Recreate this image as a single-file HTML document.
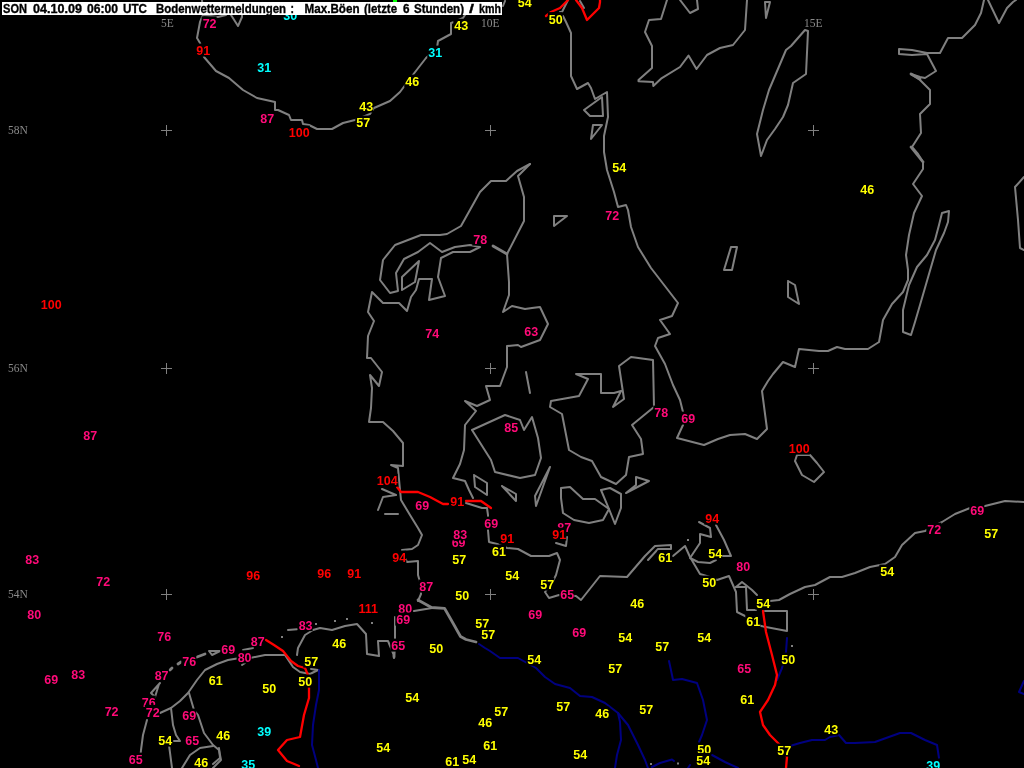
<!DOCTYPE html>
<html lang="de"><head><meta charset="utf-8"><title>Bodenwettermeldungen</title>
<style>
html,body{margin:0;padding:0;background:#000;overflow:hidden}
svg{display:block;will-change:transform}
.l{font-family:"Liberation Sans",sans-serif;font-weight:bold;font-size:12.5px;text-anchor:middle}
.g{font-family:"Liberation Serif",serif;font-size:11.5px;fill:#8a8a8a}
.t{font-family:"Liberation Sans",sans-serif;font-weight:bold;font-size:13px;fill:#000;stroke:#000;stroke-width:.35px}
polyline{fill:none;stroke-linejoin:round;stroke-linecap:round}
</style></head><body>
<svg width="1024" height="768" viewBox="0 0 1024 768">
<rect width="1024" height="768" fill="#000"/>
<g>
<polyline points="202,0 203,15 200,22 197,38 200,43 204,57 216,71 229,78 243,90 257,98 275,102 275,110 278,110 289,115 291,120 302,120 303,124 309,125 317,129 332,129 343,123 355,120 370,114 374,108 390,101 400,92 412,76 426,58 437,48 438,41 451,34 451,23 454,22 463,18 465,15" stroke="#808080" stroke-width="2"/>
<polyline points="203,15 218,17 226,15" stroke="#808080" stroke-width="2"/>
<polyline points="231,15 238,26 242,17 242,14" stroke="#808080" stroke-width="2"/>
<polyline points="503,6 505,1" stroke="#808080" stroke-width="2"/>
<polyline points="568,0 562,12 560,12" stroke="#808080" stroke-width="2"/>
<polyline points="580,1 584,8" stroke="#808080" stroke-width="2"/>
<polyline points="563,16 566,22 571,33 571,76 577,89 588,83 591,88 595,99 607,92 608,117 604,136 604,152 607,170 614,192 618,207 626,205 628,210 631,227 638,247 651,268 678,303 672,316 660,320 670,334 658,338 655,346 665,364 673,385 680,400 683,412 683,425 677,438 704,445 718,439 730,435 745,434 757,439 767,429 762,391 768,381 773,374 783,362 795,367 799,349 819,351 828,351 837,347 845,349 868,349 879,342 883,320 892,304 903,292 908,280 908,270 906,255 909,235 914,213 922,196 913,184 923,169 923,162 918,154 912,147 921,133 920,114 930,104 930,90 920,80 911,74 920,77 925,78 936,71 927,54 912,55 899,54 899,49 912,50 927,53 940,53 948,38 962,38 975,25 981,13 984,0" stroke="#808080" stroke-width="2"/>
<polyline points="584,110 602,97 603,116 590,116 584,110" stroke="#808080" stroke-width="2"/>
<polyline points="593,125 602,125 591,139 593,125" stroke="#808080" stroke-width="2"/>
<polyline points="667,0 661,19 649,20 645,32 652,46 652,68 638.5,80 638.5,81.3 653,82 653.3,86 661,78.7 680,67 688.5,55.6 696.5,69 707,55 720,48 733,45 745,30 747,0" stroke="#808080" stroke-width="2"/>
<polyline points="680,0 690,13 698,9 697,0" stroke="#808080" stroke-width="2"/>
<polyline points="765,2 766,18 770,2 765,2" stroke="#808080" stroke-width="2"/>
<polyline points="805,30 808,31 806,74 793,83 788,105 783,117 775,129 767,140 761,156 757,134 763,110 769,90 786,50 791,46 805,30" stroke="#808080" stroke-width="2"/>
<polyline points="988,0 999,23 1007,8 1013,2 1016,0" stroke="#808080" stroke-width="2"/>
<polyline points="1024,177 1015,187 1018,220 1020,248 1024,250" stroke="#808080" stroke-width="2"/>
<polyline points="942,213 949,211 948,222 944,233 936,250 929,274 920,305 915,322 911,335 903,332 903,310 909,285 917,267 927,255 935,240 939,225 942,213" stroke="#808080" stroke-width="2"/>
<polyline points="731,247 737,247 732,270 724,270 731,247" stroke="#808080" stroke-width="2"/>
<polyline points="788,281 795,285 799,304 788,297 788,281" stroke="#808080" stroke-width="2"/>
<polyline points="797,455 810,455 817,463 824,472 814,482 802,475 795,461 797,455" stroke="#808080" stroke-width="2"/>
<polyline points="530,164 517,171 506,181 491,181 480,192 461,226 447,234 440,235 421,235 395,245 383,260 380,280 390,293 398,291 396,273 404,259 418,252 430,243 442,252 455,247 470,245 480,247 470,252 453,252 441,258 438,277 445,296 429,300 432,279 419,279 416,290 411,297 407,311 399,303 383,303 372,292 368,312 374,321 368,336 367,358 371,358 382,372 379,386 370,375 372,388 371,408 369,422 383,422 393,431 403,443 403,466 391,465 398,468 400,490 401,500 410,515 418,528 422,535 418,545 412,549 402,550 404,556 407,562 418,561 418,575 420,582 421,594 418,601" stroke="#808080" stroke-width="2"/>
<polyline points="414,611 432,608" stroke="#808080" stroke-width="2"/>
<polyline points="530,164 518,176 524,197 524,221 507,254 509,282 509,295 503,312 512,306 525,309 532,308 540,307 548,324 540,340 521,347 518,345 507,346 507,367 500,386 486,386 490,400 477,406 465,401 476,411 465,425 464,450 460,464 453,478 465,481 469,490 473,498" stroke="#808080" stroke-width="2"/>
<polyline points="466,503 482,508 487,508 488,515 488,530 489,542 497,544 507,548 518,549 531,556 549,556 557,553 560,560 556,575 552,583 545,592 549,598 559,595 576,596 581,600 600,576 627,577 645,556 655,546 671,545 671,549 658,549 648,560" stroke="#808080" stroke-width="2"/>
<polyline points="556,543 566,546 567,537" stroke="#808080" stroke-width="2"/>
<polyline points="402,277 419,261 415,282 402,290 402,277" stroke="#808080" stroke-width="2"/>
<polyline points="554,216 567,216 554,226 554,216" stroke="#808080" stroke-width="2"/>
<polyline points="526,372 530,393" stroke="#808080" stroke-width="2"/>
<polyline points="472,430 505,415 520,420 524,430 532,417 538,438 541,458 535,475 520,478 495,472 491,460 472,430" stroke="#808080" stroke-width="2"/>
<polyline points="474,475 487,483 487,495 475,487 474,475" stroke="#808080" stroke-width="2"/>
<polyline points="502,486 516,494 516,501 502,486" stroke="#808080" stroke-width="2"/>
<polyline points="550,467 535,496 536,506 550,467" stroke="#808080" stroke-width="2"/>
<polyline points="576,374 588,379 579,396 551,401 550,407 562,414 569,450 581,457 592,461 601,477 616,484 626,475 629,457 643,454 641,439 632,425 654,407 653,360 631,357 619,366 624,399 613,407 621,391 614,393 601,393 601,374 576,374" stroke="#808080" stroke-width="2"/>
<polyline points="561,488 570,487 583,499 595,499 609,509 603,520 589,523 574,520 563,513 561,498 561,488" stroke="#808080" stroke-width="2"/>
<polyline points="601,490 610,488 621,494 621,508 615,524 609,509 601,490" stroke="#808080" stroke-width="2"/>
<polyline points="636,477 649,481 626,493 636,485 636,477" stroke="#808080" stroke-width="2"/>
<polyline points="382,489 396,495 383,497 378,510" stroke="#808080" stroke-width="2"/>
<polyline points="385,514 398,514" stroke="#808080" stroke-width="2"/>
<polyline points="673,556 685,546 690,557 700,574 710,577 717,580 729,576 736,592 737,612 747,617 761,626 787,631 787,611 765,611" stroke="#808080" stroke-width="2"/>
<polyline points="699,522 710,528 711,537 700,534 700,543 690,558 698,562 710,563 716,560" stroke="#808080" stroke-width="2"/>
<polyline points="716,525 724,540 731,556 722,556" stroke="#808080" stroke-width="2"/>
<polyline points="736,587 742,582 752,590 757,595" stroke="#808080" stroke-width="2"/>
<polyline points="736,587 746,587 747,610 756,610" stroke="#808080" stroke-width="2"/>
<polyline points="770,601 779,600 790,594 805,587 815,585 830,577 842,577 855,573 870,567 880,565 885,564 895,557 902,545 915,533 925,531 942,522 955,514 970,508 985,506 1005,501 1024,502" stroke="#808080" stroke-width="2"/>
<polyline points="160,713 171,708 180,701 188,693 197,680 205,670 217,664 228,660 240,658 250,658 265,655 285,655 293,667 300,672 310,674 318,670 311,669" stroke="#808080" stroke-width="2"/>
<polyline points="297,655 298,648 305,635 313,630 320,628 332,630 345,626 357,624 366,634 367,654 379,656 378,641 388,641 393,653" stroke="#808080" stroke-width="2"/>
<polyline points="395,617 395,647 394,658" stroke="#808080" stroke-width="2"/>
<polyline points="171,708 173,725 176,735 180,741 174,741" stroke="#808080" stroke-width="2"/>
<polyline points="189,693 194,710 198,715 204,733 213,745 219,750 221,760 213,768" stroke="#808080" stroke-width="2"/>
<polyline points="213,746 200,748 190,755 182,768" stroke="#808080" stroke-width="2"/>
<polyline points="219,748 220,758 213,764" stroke="#808080" stroke-width="2"/>
<polyline points="160,683 151,693 155,697 159,684" stroke="#808080" stroke-width="2"/>
<polyline points="147,720 143,735 141,750 140,762" stroke="#808080" stroke-width="2"/>
<polyline points="169,745 172,768" stroke="#808080" stroke-width="2"/>
<polyline points="209,651 220,651 212,655 209,651" stroke="#808080" stroke-width="2"/>
<polyline points="243,650 253,648" stroke="#808080" stroke-width="2"/>
<polyline points="242,665 245,663" stroke="#808080" stroke-width="2"/>
<polyline points="288,630 297,629.3" stroke="#808080" stroke-width="2"/>
<polyline points="493,246 507,254" stroke="#808080" stroke-width="2.8"/>
<polyline points="911,147 923,162" stroke="#808080" stroke-width="2.8"/>
<polyline points="911,74 920,79" stroke="#808080" stroke-width="2.8"/>
<polyline points="418,600 431.5,607.5 444.5,608.3 453.5,624 460.5,636.5 466,639.5 476,642" stroke="#808080" stroke-width="2.8"/>
<polyline points="170,670 172,668" stroke="#808080" stroke-width="2.8"/>
<polyline points="178,664 181,662" stroke="#808080" stroke-width="2.8"/>
<polyline points="197,657 205,654" stroke="#808080" stroke-width="2.8"/>
<polyline points="393,641 394,657" stroke="#808080" stroke-width="2.8"/>
<rect x="650" y="763" width="2" height="2" fill="#808080"/>
<rect x="677" y="762.5" width="2" height="2" fill="#808080"/>
<rect x="281" y="636" width="2" height="2" fill="#808080"/>
<rect x="315" y="623" width="2" height="2" fill="#808080"/>
<rect x="334" y="620" width="2" height="2" fill="#808080"/>
<rect x="346" y="618" width="2" height="2" fill="#808080"/>
<rect x="371" y="622" width="2" height="2" fill="#808080"/>
<rect x="687" y="539" width="2" height="2" fill="#808080"/>
<rect x="791" y="645" width="2" height="2" fill="#808080"/>
<polyline points="319,670 319,690 316,705 313,725 312,745 316,760 318,768" stroke="#000080" stroke-width="2"/>
<polyline points="479,644 485,648 490,651 500,658 518,658 527,663 536,668 545,677 555,684 570,688 580,696 592,697 605,703 618,713 620,722 621,740 617,755 615,768" stroke="#000080" stroke-width="2"/>
<polyline points="618,713 628,725 638,745 645,760 648,768" stroke="#000080" stroke-width="2"/>
<polyline points="669,661 672,675 673,680 682,679 697,683 703,700 707,720 702,735 699,742" stroke="#000080" stroke-width="2"/>
<polyline points="652,767 660,763 672,759.5 674,761" stroke="#000080" stroke-width="2"/>
<polyline points="688,768 690,765" stroke="#000080" stroke-width="2"/>
<polyline points="712,755 725,762 738,768" stroke="#000080" stroke-width="2"/>
<polyline points="787,638 786,652 782,668 777,680" stroke="#000080" stroke-width="2"/>
<polyline points="790,746 800,743 812,740 825,740 830,737 839,735 846,743 855,743 875,742 900,733 911,733 925,740 937,745 939,758" stroke="#000080" stroke-width="2"/>
<polyline points="1024,681 1019,692 1024,694" stroke="#000080" stroke-width="2"/>
<polyline points="397,487 401,492 418,492 430,497 443,504 448,504" stroke="#ff0000" stroke-width="2.3"/>
<polyline points="466,501 481,501 491,508" stroke="#ff0000" stroke-width="2.3"/>
<polyline points="266,640 274,645 283,651 291,661 298,666 305,668 308,675 309,688 309,698 304,715 300,737 287,740 278,750 287,761 299,766" stroke="#ff0000" stroke-width="2.3"/>
<polyline points="763,611 766,632 772,655 777,675 775,685 768,700 760,712 763,725 770,735 780,745 787,757 786,768" stroke="#ff0000" stroke-width="2.3"/>
<polyline points="546,16 551,12 560,8 566,2 568,0" stroke="#ff0000" stroke-width="2.3"/>
<polyline points="576,0 582,8 587,20 595,12 599,8 600,2 600,0" stroke="#ff0000" stroke-width="2.3"/>
</g>
<g stroke="#808080" stroke-width="1" shape-rendering="crispEdges">
<path d="M161 130.5h11M166.5 125v11"/>
<path d="M161 368.5h11M166.5 363v11"/>
<path d="M161 594.5h11M166.5 589v11"/>
<path d="M485 130.5h11M490.5 125v11"/>
<path d="M485 368.5h11M490.5 363v11"/>
<path d="M485 594.5h11M490.5 589v11"/>
<path d="M808 130.5h11M813.5 125v11"/>
<path d="M808 368.5h11M813.5 363v11"/>
<path d="M808 594.5h11M813.5 589v11"/>
</g>
<text class="g" x="161" y="26.7">5E</text>
<text class="g" x="481" y="26.7">10E</text>
<text class="g" x="804" y="26.7">15E</text>
<text class="g" x="8" y="134">58N</text>
<text class="g" x="8" y="372">56N</text>
<text class="g" x="8" y="598">54N</text>
<rect x="393" y="0" width="4" height="3" fill="#00ff00"/>
<rect x="282.3" y="8.1" width="15" height="13" fill="#000"/><text class="l" fill="#00ffff" x="290.3" y="19.7">30</text>
<rect x="201.6" y="16.4" width="15" height="13" fill="#000"/><text class="l" fill="#ff0a78" x="209.6" y="28">72</text>
<rect x="195.3" y="43.6" width="15" height="13" fill="#000"/><text class="l" fill="#ff0000" x="203.3" y="55.2">91</text>
<rect x="256.3" y="60.6" width="15" height="13" fill="#000"/><text class="l" fill="#00ffff" x="264.3" y="72.2">31</text>
<rect x="259.3" y="111.6" width="15" height="13" fill="#000"/><text class="l" fill="#ff0a78" x="267.3" y="123.2">87</text>
<rect x="287.8" y="125.6" width="22" height="13" fill="#000"/><text class="l" fill="#ff0000" x="299.3" y="137.2">100</text>
<rect x="358.3" y="99.6" width="15" height="13" fill="#000"/><text class="l" fill="#ffff00" x="366.3" y="111.2">43</text>
<rect x="355.3" y="115.6" width="15" height="13" fill="#000"/><text class="l" fill="#ffff00" x="363.3" y="127.2">57</text>
<rect x="404.3" y="74.6" width="15" height="13" fill="#000"/><text class="l" fill="#ffff00" x="412.3" y="86.2">46</text>
<rect x="427.3" y="45.6" width="15" height="13" fill="#000"/><text class="l" fill="#00ffff" x="435.3" y="57.2">31</text>
<rect x="453.3" y="18.8" width="15" height="13" fill="#000"/><text class="l" fill="#ffff00" x="461.3" y="30.4">43</text>
<rect x="516.8" y="-5.1" width="15" height="13" fill="#000"/><text class="l" fill="#ffff00" x="524.8" y="6.5">54</text>
<rect x="547.8" y="12.1" width="15" height="13" fill="#000"/><text class="l" fill="#ffff00" x="555.8" y="23.7">50</text>
<rect x="611.3" y="160.6" width="15" height="13" fill="#000"/><text class="l" fill="#ffff00" x="619.3" y="172.2">54</text>
<rect x="859.3" y="182.6" width="15" height="13" fill="#000"/><text class="l" fill="#ffff00" x="867.3" y="194.2">46</text>
<rect x="39.8" y="297.6" width="22" height="13" fill="#000"/><text class="l" fill="#ff0000" x="51.3" y="309.2">100</text>
<rect x="472.3" y="232.6" width="15" height="13" fill="#000"/><text class="l" fill="#ff0a78" x="480.3" y="244.2">78</text>
<rect x="424.3" y="326.6" width="15" height="13" fill="#000"/><text class="l" fill="#ff0a78" x="432.3" y="338.2">74</text>
<rect x="523.3" y="324.8" width="15" height="13" fill="#000"/><text class="l" fill="#ff0a78" x="531.3" y="336.4">63</text>
<rect x="503.3" y="420.6" width="15" height="13" fill="#000"/><text class="l" fill="#ff0a78" x="511.3" y="432.2">85</text>
<rect x="604.3" y="208.6" width="15" height="13" fill="#000"/><text class="l" fill="#ff0a78" x="612.3" y="220.2">72</text>
<rect x="653.3" y="405.6" width="15" height="13" fill="#000"/><text class="l" fill="#ff0a78" x="661.3" y="417.2">78</text>
<rect x="680.3" y="411.6" width="15" height="13" fill="#000"/><text class="l" fill="#ff0a78" x="688.3" y="423.2">69</text>
<rect x="787.8" y="441.6" width="22" height="13" fill="#000"/><text class="l" fill="#ff0000" x="799.3" y="453.2">100</text>
<rect x="82.3" y="428.6" width="15" height="13" fill="#000"/><text class="l" fill="#ff0a78" x="90.3" y="440.2">87</text>
<rect x="24.3" y="551.9" width="15" height="13" fill="#000"/><text class="l" fill="#ff0a78" x="32.3" y="563.5">83</text>
<rect x="95.3" y="574.6" width="15" height="13" fill="#000"/><text class="l" fill="#ff0a78" x="103.3" y="586.2">72</text>
<rect x="26.3" y="607.8" width="15" height="13" fill="#000"/><text class="l" fill="#ff0a78" x="34.3" y="619.4">80</text>
<rect x="375.8" y="473.8" width="22" height="13" fill="#000"/><text class="l" fill="#ff0000" x="387.3" y="485.4">104</text>
<rect x="449.3" y="494.8" width="15" height="13" fill="#000"/><text class="l" fill="#ff0000" x="457.3" y="506.4">91</text>
<rect x="414.3" y="498.6" width="15" height="13" fill="#000"/><text class="l" fill="#ff0a78" x="422.3" y="510.2">69</text>
<rect x="483.3" y="516.6" width="15" height="13" fill="#000"/><text class="l" fill="#ff0a78" x="491.3" y="528.2">69</text>
<rect x="450.6" y="535.8" width="15" height="13" fill="#000"/><text class="l" fill="#ff0a78" x="458.6" y="547.4">69</text>
<rect x="452.3" y="527.4" width="15" height="13" fill="#000"/><text class="l" fill="#ff0a78" x="460.3" y="539">83</text>
<rect x="499.3" y="531.4" width="15" height="13" fill="#000"/><text class="l" fill="#ff0000" x="507.3" y="543">91</text>
<rect x="556.3" y="520.1" width="15" height="13" fill="#000"/><text class="l" fill="#ff0a78" x="564.3" y="531.7">87</text>
<rect x="551.3" y="527.6" width="15" height="13" fill="#000"/><text class="l" fill="#ff0000" x="559.3" y="539.2">91</text>
<rect x="391.3" y="550.6" width="15" height="13" fill="#000"/><text class="l" fill="#ff0000" x="399.3" y="562.2">94</text>
<rect x="491" y="544.6" width="15" height="13" fill="#000"/><text class="l" fill="#ffff00" x="499" y="556.2">61</text>
<rect x="451.3" y="552.6" width="15" height="13" fill="#000"/><text class="l" fill="#ffff00" x="459.3" y="564.2">57</text>
<rect x="504.3" y="568.6" width="15" height="13" fill="#000"/><text class="l" fill="#ffff00" x="512.3" y="580.2">54</text>
<rect x="539.3" y="577.6" width="15" height="13" fill="#000"/><text class="l" fill="#ffff00" x="547.3" y="589.2">57</text>
<rect x="245.3" y="568.6" width="15" height="13" fill="#000"/><text class="l" fill="#ff0000" x="253.3" y="580.2">96</text>
<rect x="316.3" y="566.6" width="15" height="13" fill="#000"/><text class="l" fill="#ff0000" x="324.3" y="578.2">96</text>
<rect x="346.3" y="566.6" width="15" height="13" fill="#000"/><text class="l" fill="#ff0000" x="354.3" y="578.2">91</text>
<rect x="418.3" y="579.6" width="15" height="13" fill="#000"/><text class="l" fill="#ff0a78" x="426.3" y="591.2">87</text>
<rect x="559.3" y="587.6" width="15" height="13" fill="#000"/><text class="l" fill="#ff0a78" x="567.3" y="599.2">65</text>
<rect x="454.3" y="588.6" width="15" height="13" fill="#000"/><text class="l" fill="#ffff00" x="462.3" y="600.2">50</text>
<rect x="356.8" y="601.6" width="22" height="13" fill="#000"/><text class="l" fill="#ff0000" x="368.3" y="613.2">111</text>
<rect x="397.3" y="601.6" width="15" height="13" fill="#000"/><text class="l" fill="#ff0a78" x="405.3" y="613.2">80</text>
<rect x="395.3" y="612.6" width="15" height="13" fill="#000"/><text class="l" fill="#ff0a78" x="403.3" y="624.2">69</text>
<rect x="297.6" y="618.1" width="15" height="13" fill="#000"/><text class="l" fill="#ff0a78" x="305.6" y="629.7">83</text>
<rect x="527.3" y="607.6" width="15" height="13" fill="#000"/><text class="l" fill="#ff0a78" x="535.3" y="619.2">69</text>
<rect x="474.3" y="616.6" width="15" height="13" fill="#000"/><text class="l" fill="#ffff00" x="482.3" y="628.2">57</text>
<rect x="480.3" y="627.6" width="15" height="13" fill="#000"/><text class="l" fill="#ffff00" x="488.3" y="639.2">57</text>
<rect x="571.3" y="625.6" width="15" height="13" fill="#000"/><text class="l" fill="#ff0a78" x="579.3" y="637.2">69</text>
<rect x="156.3" y="629.6" width="15" height="13" fill="#000"/><text class="l" fill="#ff0a78" x="164.3" y="641.2">76</text>
<rect x="249.7" y="634.2" width="15" height="13" fill="#000"/><text class="l" fill="#ff0a78" x="257.7" y="645.8">87</text>
<rect x="220.3" y="641.9" width="15" height="13" fill="#000"/><text class="l" fill="#ff0a78" x="228.3" y="653.5">69</text>
<rect x="181.3" y="654.6" width="15" height="13" fill="#000"/><text class="l" fill="#ff0a78" x="189.3" y="666.2">76</text>
<rect x="236.6" y="650.4" width="15" height="13" fill="#000"/><text class="l" fill="#ff0a78" x="244.6" y="662">80</text>
<rect x="331.3" y="636.6" width="15" height="13" fill="#000"/><text class="l" fill="#ffff00" x="339.3" y="648.2">46</text>
<rect x="390.3" y="638.6" width="15" height="13" fill="#000"/><text class="l" fill="#ff0a78" x="398.3" y="650.2">65</text>
<rect x="428.3" y="641.6" width="15" height="13" fill="#000"/><text class="l" fill="#ffff00" x="436.3" y="653.2">50</text>
<rect x="303.3" y="654.6" width="15" height="13" fill="#000"/><text class="l" fill="#ffff00" x="311.3" y="666.2">57</text>
<rect x="70.3" y="667.8" width="15" height="13" fill="#000"/><text class="l" fill="#ff0a78" x="78.3" y="679.4">83</text>
<rect x="43.3" y="672.8" width="15" height="13" fill="#000"/><text class="l" fill="#ff0a78" x="51.3" y="684.4">69</text>
<rect x="153.6" y="668.6" width="15" height="13" fill="#000"/><text class="l" fill="#ff0a78" x="161.6" y="680.2">87</text>
<rect x="207.8" y="672.9" width="15" height="13" fill="#000"/><text class="l" fill="#ffff00" x="215.8" y="684.5">61</text>
<rect x="297.3" y="674.6" width="15" height="13" fill="#000"/><text class="l" fill="#ffff00" x="305.3" y="686.2">50</text>
<rect x="261.3" y="681.6" width="15" height="13" fill="#000"/><text class="l" fill="#ffff00" x="269.3" y="693.2">50</text>
<rect x="140.8" y="695.6" width="15" height="13" fill="#000"/><text class="l" fill="#ff0a78" x="148.8" y="707.2">76</text>
<rect x="144.8" y="704.9" width="15" height="13" fill="#000"/><text class="l" fill="#ff0a78" x="152.8" y="716.5">72</text>
<rect x="103.6" y="704.8" width="15" height="13" fill="#000"/><text class="l" fill="#ff0a78" x="111.6" y="716.4">72</text>
<rect x="181.3" y="708.6" width="15" height="13" fill="#000"/><text class="l" fill="#ff0a78" x="189.3" y="720.2">69</text>
<rect x="404.3" y="690.6" width="15" height="13" fill="#000"/><text class="l" fill="#ffff00" x="412.3" y="702.2">54</text>
<rect x="157.3" y="733.6" width="15" height="13" fill="#000"/><text class="l" fill="#ffff00" x="165.3" y="745.2">54</text>
<rect x="184.3" y="733.6" width="15" height="13" fill="#000"/><text class="l" fill="#ff0a78" x="192.3" y="745.2">65</text>
<rect x="215.3" y="727.9" width="15" height="13" fill="#000"/><text class="l" fill="#ffff00" x="223.3" y="739.5">46</text>
<rect x="256.3" y="724.6" width="15" height="13" fill="#000"/><text class="l" fill="#00ffff" x="264.3" y="736.2">39</text>
<rect x="193.3" y="754.9" width="15" height="13" fill="#000"/><text class="l" fill="#ffff00" x="201.3" y="766.5">46</text>
<rect x="127.7" y="752.6" width="15" height="13" fill="#000"/><text class="l" fill="#ff0a78" x="135.7" y="764.2">65</text>
<rect x="240.3" y="757.1" width="15" height="13" fill="#000"/><text class="l" fill="#00ffff" x="248.3" y="768.7">35</text>
<rect x="375.3" y="740.6" width="15" height="13" fill="#000"/><text class="l" fill="#ffff00" x="383.3" y="752.2">54</text>
<rect x="444.3" y="754.6" width="15" height="13" fill="#000"/><text class="l" fill="#ffff00" x="452.3" y="766.2">61</text>
<rect x="461.3" y="752.6" width="15" height="13" fill="#000"/><text class="l" fill="#ffff00" x="469.3" y="764.2">54</text>
<rect x="617.3" y="630.6" width="15" height="13" fill="#000"/><text class="l" fill="#ffff00" x="625.3" y="642.2">54</text>
<rect x="526.3" y="652.6" width="15" height="13" fill="#000"/><text class="l" fill="#ffff00" x="534.3" y="664.2">54</text>
<rect x="607.3" y="661.6" width="15" height="13" fill="#000"/><text class="l" fill="#ffff00" x="615.3" y="673.2">57</text>
<rect x="493.3" y="704.6" width="15" height="13" fill="#000"/><text class="l" fill="#ffff00" x="501.3" y="716.2">57</text>
<rect x="477.3" y="715.6" width="15" height="13" fill="#000"/><text class="l" fill="#ffff00" x="485.3" y="727.2">46</text>
<rect x="555.3" y="699.6" width="15" height="13" fill="#000"/><text class="l" fill="#ffff00" x="563.3" y="711.2">57</text>
<rect x="594.3" y="706.6" width="15" height="13" fill="#000"/><text class="l" fill="#ffff00" x="602.3" y="718.2">46</text>
<rect x="482.3" y="738.6" width="15" height="13" fill="#000"/><text class="l" fill="#ffff00" x="490.3" y="750.2">61</text>
<rect x="572.3" y="747.6" width="15" height="13" fill="#000"/><text class="l" fill="#ffff00" x="580.3" y="759.2">54</text>
<rect x="704.3" y="511.6" width="15" height="13" fill="#000"/><text class="l" fill="#ff0000" x="712.3" y="523.2">94</text>
<rect x="657.3" y="550.6" width="15" height="13" fill="#000"/><text class="l" fill="#ffff00" x="665.3" y="562.2">61</text>
<rect x="707.3" y="546.6" width="15" height="13" fill="#000"/><text class="l" fill="#ffff00" x="715.3" y="558.2">54</text>
<rect x="735.3" y="559.6" width="15" height="13" fill="#000"/><text class="l" fill="#ff0a78" x="743.3" y="571.2">80</text>
<rect x="701.3" y="575.6" width="15" height="13" fill="#000"/><text class="l" fill="#ffff00" x="709.3" y="587.2">50</text>
<rect x="755.3" y="596.6" width="15" height="13" fill="#000"/><text class="l" fill="#ffff00" x="763.3" y="608.2">54</text>
<rect x="629.3" y="596.6" width="15" height="13" fill="#000"/><text class="l" fill="#ffff00" x="637.3" y="608.2">46</text>
<rect x="745.3" y="614.6" width="15" height="13" fill="#000"/><text class="l" fill="#ffff00" x="753.3" y="626.2">61</text>
<rect x="696.3" y="630.6" width="15" height="13" fill="#000"/><text class="l" fill="#ffff00" x="704.3" y="642.2">54</text>
<rect x="654.3" y="639.6" width="15" height="13" fill="#000"/><text class="l" fill="#ffff00" x="662.3" y="651.2">57</text>
<rect x="780.3" y="652.6" width="15" height="13" fill="#000"/><text class="l" fill="#ffff00" x="788.3" y="664.2">50</text>
<rect x="736.3" y="661.6" width="15" height="13" fill="#000"/><text class="l" fill="#ff0a78" x="744.3" y="673.2">65</text>
<rect x="739.3" y="692.6" width="15" height="13" fill="#000"/><text class="l" fill="#ffff00" x="747.3" y="704.2">61</text>
<rect x="638.3" y="702.6" width="15" height="13" fill="#000"/><text class="l" fill="#ffff00" x="646.3" y="714.2">57</text>
<rect x="823.3" y="722.4" width="15" height="13" fill="#000"/><text class="l" fill="#ffff00" x="831.3" y="734">43</text>
<rect x="696.3" y="742.6" width="15" height="13" fill="#000"/><text class="l" fill="#ffff00" x="704.3" y="754.2">50</text>
<rect x="695.3" y="752.9" width="15" height="13" fill="#000"/><text class="l" fill="#ffff00" x="703.3" y="764.5">54</text>
<rect x="776.3" y="743.6" width="15" height="13" fill="#000"/><text class="l" fill="#ffff00" x="784.3" y="755.2">57</text>
<rect x="879.3" y="564.6" width="15" height="13" fill="#000"/><text class="l" fill="#ffff00" x="887.3" y="576.2">54</text>
<rect x="926.3" y="522.6" width="15" height="13" fill="#000"/><text class="l" fill="#ff0a78" x="934.3" y="534.2">72</text>
<rect x="969.3" y="503.6" width="15" height="13" fill="#000"/><text class="l" fill="#ff0a78" x="977.3" y="515.2">69</text>
<rect x="983.3" y="526.4" width="15" height="13" fill="#000"/><text class="l" fill="#ffff00" x="991.3" y="538">57</text>
<rect x="925.3" y="758.6" width="15" height="13" fill="#000"/><text class="l" fill="#00ffff" x="933.3" y="770.2">39</text>
<rect x="2" y="2" width="500" height="13" fill="#fff"/>
<text class="t" x="3" y="13" textLength="24" lengthAdjust="spacingAndGlyphs">SON</text>
<text class="t" x="33" y="13" textLength="49" lengthAdjust="spacingAndGlyphs">04.10.09</text>
<text class="t" x="87" y="13" textLength="31" lengthAdjust="spacingAndGlyphs">06:00</text>
<text class="t" x="123" y="13" textLength="24" lengthAdjust="spacingAndGlyphs">UTC</text>
<text class="t" x="156" y="13" textLength="130" lengthAdjust="spacingAndGlyphs">Bodenwettermeldungen</text>
<text class="t" x="290.5" y="13" textLength="3.5" lengthAdjust="spacingAndGlyphs">:</text>
<text class="t" x="304.5" y="13" textLength="55" lengthAdjust="spacingAndGlyphs">Max.Böen</text>
<text class="t" x="364" y="13" textLength="33" lengthAdjust="spacingAndGlyphs">(letzte</text>
<text class="t" x="403" y="13" textLength="6.5" lengthAdjust="spacingAndGlyphs">6</text>
<text class="t" x="414" y="13" textLength="50" lengthAdjust="spacingAndGlyphs">Stunden)</text>
<text class="t" x="469" y="13" textLength="5" lengthAdjust="spacingAndGlyphs">/</text>
<text class="t" x="479" y="13" textLength="22" lengthAdjust="spacingAndGlyphs">kmh</text>
</svg></body></html>
